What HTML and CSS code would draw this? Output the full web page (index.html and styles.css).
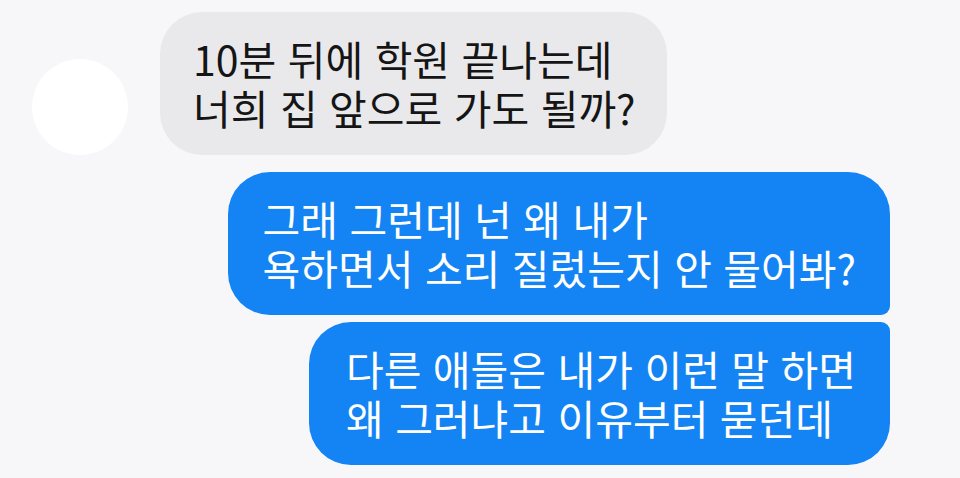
FILE: index.html
```html
<!DOCTYPE html>
<html lang="ko">
<head>
    <meta charset="UTF-8">
    <meta name="viewport" content="width=device-width, initial-scale=1.0">
    <title>Chat</title>
    <link rel="stylesheet" href="styles.css">
</head>
<body>
    <div class="chat">
        <!-- incoming message with avatar -->
        <div class="row incoming">
            <div class="avatar"></div>
            <div class="bubble gray">10분 뒤에 학원 끝나는데<br>너희 집 앞으로 가도 될까?</div>
        </div>

        <!-- outgoing messages -->
        <div class="row outgoing">
            <div class="bubble blue first">그래 그런데 넌 왜 내가<br>욕하면서 소리 질렀는지 안 물어봐?</div>
        </div>
        <div class="row outgoing close">
            <div class="bubble blue last">다른 애들은 내가 이런 말 하면<br>왜 그러냐고 이유부터 묻던데</div>
        </div>
    </div>
</body>
</html>
```

FILE: styles.css
```css
body {
    margin: 0;
    padding: 0;
    font-family: "Noto Sans CJK KR", "Noto Sans", sans-serif;
    background: #f7f7f9;
    height: 478px;
    overflow: hidden;
}

.chat {
    display: flex;
    flex-direction: column;
    padding: 12px 70px 0 32px;
}

.row {
    display: flex;
    align-items: flex-end;
}

.row.incoming {
    gap: 32px;
}

.row.outgoing {
    justify-content: flex-end;
    margin-top: 17px;
}

.row.outgoing.close {
    margin-top: 7px;
}

.avatar {
    width: 96px;
    height: 96px;
    border-radius: 50%;
    background: #fff;
    flex-shrink: 0;
}

.bubble {
    font-size: 41px;
    line-height: 49px;
    padding: 22px 34px 23px 34px;
    border-radius: 42px;
    white-space: nowrap;
}

.bubble.gray {
    background: #e9e9eb;
    color: #151515;
    padding-left: 33px;
    padding-right: 31px;
}

/* Blue bubbles */
.bubble.blue {
    background: #1484f4;
    color: #fff;
    padding-left: 35px;
}

.bubble.first {
    border-bottom-right-radius: 9px;
}

.bubble.last {
    border-top-right-radius: 9px;
    padding-left: 37px;
}
```
